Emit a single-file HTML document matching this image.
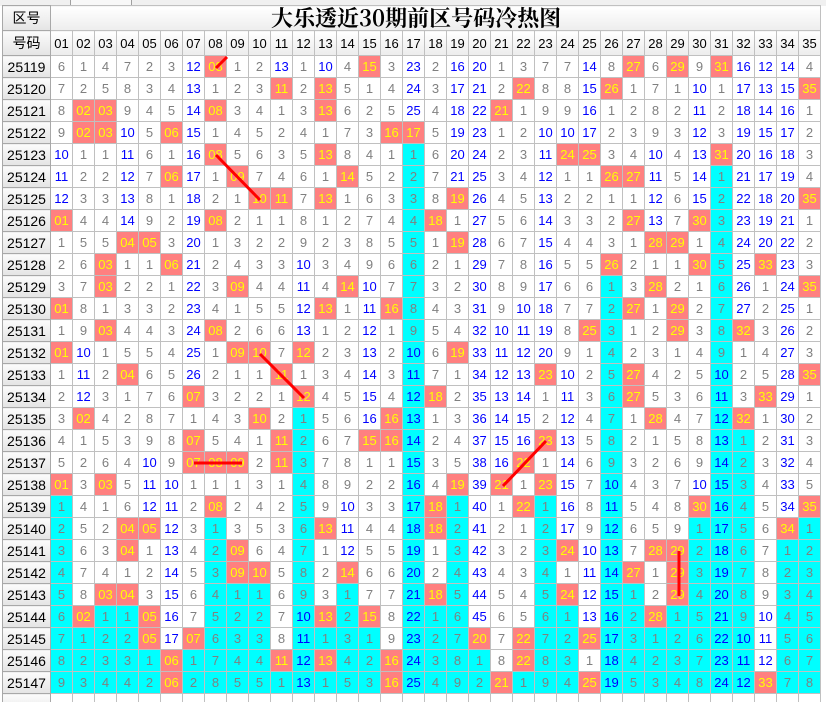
<!DOCTYPE html>
<html><head><meta charset="utf-8"><style>
html,body{margin:0;padding:0;background:#fff;width:826px;height:702px;overflow:hidden;position:relative}
.top{position:absolute;left:0;top:0;width:826px;height:6px;background:#f0f0f0}
.tab{position:absolute;left:70px;top:-2px;width:60px;height:6px;border:1px solid #a0a0a0;background:#f8f8f8}
table{position:absolute;left:2px;top:5px;border-collapse:collapse;table-layout:fixed;font-family:"Liberation Sans","Noto Sans CJK SC",sans-serif}
td,th{border:1px solid #c0c0c0;padding:0;text-align:center;font-weight:normal;overflow:hidden;white-space:nowrap}
td{width:21px;height:21px;font-size:13px;color:#808080;line-height:21px}
th{width:47px;font-size:14px;color:#000;background:linear-gradient(#fbfbfb,#e4e4e4);border-color:#a8a8a8}
tr.hd td{color:#000;font-size:13px;background:linear-gradient(#fff,#ececec);height:24px;border-color:#c0c0c0}
.t{font-family:"Noto Serif CJK SC",serif;font-weight:bold;font-size:22px;color:#000;text-align:left;padding-left:220px;background:linear-gradient(#fff,#ededed);height:24px;line-height:24px}
.b{color:#00f}.h{background:#ff8080;color:#ff0}.c{background:#0ff}.d{background:#0ff;color:#00f}
svg{position:absolute;left:0;top:0}
</style></head><body>
<div class="top"></div><div class="tab"></div>
<table>
<tr><th style="height:24px">区号</th><td colspan="35" class="t">大乐透近30期前区号码冷热图</td></tr>
<tr class="hd"><th style="height:24px">号码</th><td>01</td><td>02</td><td>03</td><td>04</td><td>05</td><td>06</td><td>07</td><td>08</td><td>09</td><td>10</td><td>11</td><td>12</td><td>13</td><td>14</td><td>15</td><td>16</td><td>17</td><td>18</td><td>19</td><td>20</td><td>21</td><td>22</td><td>23</td><td>24</td><td>25</td><td>26</td><td>27</td><td>28</td><td>29</td><td>30</td><td>31</td><td>32</td><td>33</td><td>34</td><td>35</td></tr>
<tr><th>25119</th><td>6</td><td>1</td><td>4</td><td>7</td><td>2</td><td>3</td><td class=b>12</td><td class=h>08</td><td>1</td><td>2</td><td class=b>13</td><td>1</td><td class=b>10</td><td>4</td><td class=h>15</td><td>3</td><td class=b>23</td><td>2</td><td class=b>16</td><td class=b>20</td><td>1</td><td>3</td><td>7</td><td>7</td><td class=b>14</td><td>8</td><td class=h>27</td><td>6</td><td class=h>29</td><td>9</td><td class=h>31</td><td class=b>16</td><td class=b>12</td><td class=b>14</td><td>4</td></tr>
<tr><th>25120</th><td>7</td><td>2</td><td>5</td><td>8</td><td>3</td><td>4</td><td class=b>13</td><td>1</td><td>2</td><td>3</td><td class=h>11</td><td>2</td><td class=h>13</td><td>5</td><td>1</td><td>4</td><td class=b>24</td><td>3</td><td class=b>17</td><td class=b>21</td><td>2</td><td class=h>22</td><td>8</td><td>8</td><td class=b>15</td><td class=h>26</td><td>1</td><td>7</td><td>1</td><td class=b>10</td><td>1</td><td class=b>17</td><td class=b>13</td><td class=b>15</td><td class=h>35</td></tr>
<tr><th>25121</th><td>8</td><td class=h>02</td><td class=h>03</td><td>9</td><td>4</td><td>5</td><td class=b>14</td><td class=h>08</td><td>3</td><td>4</td><td>1</td><td>3</td><td class=h>13</td><td>6</td><td>2</td><td>5</td><td class=b>25</td><td>4</td><td class=b>18</td><td class=b>22</td><td class=h>21</td><td>1</td><td>9</td><td>9</td><td class=b>16</td><td>1</td><td>2</td><td>8</td><td>2</td><td class=b>11</td><td>2</td><td class=b>18</td><td class=b>14</td><td class=b>16</td><td>1</td></tr>
<tr><th>25122</th><td>9</td><td class=h>02</td><td class=h>03</td><td class=b>10</td><td>5</td><td class=h>06</td><td class=b>15</td><td>1</td><td>4</td><td>5</td><td>2</td><td>4</td><td>1</td><td>7</td><td>3</td><td class=h>16</td><td class=h>17</td><td>5</td><td class=b>19</td><td class=b>23</td><td>1</td><td>2</td><td class=b>10</td><td class=b>10</td><td class=b>17</td><td>2</td><td>3</td><td>9</td><td>3</td><td class=b>12</td><td>3</td><td class=b>19</td><td class=b>15</td><td class=b>17</td><td>2</td></tr>
<tr><th>25123</th><td class=b>10</td><td>1</td><td>1</td><td class=b>11</td><td>6</td><td>1</td><td class=b>16</td><td class=h>08</td><td>5</td><td>6</td><td>3</td><td>5</td><td class=h>13</td><td>8</td><td>4</td><td>1</td><td class=c>1</td><td>6</td><td class=b>20</td><td class=b>24</td><td>2</td><td>3</td><td class=b>11</td><td class=h>24</td><td class=h>25</td><td>3</td><td>4</td><td class=b>10</td><td>4</td><td class=b>13</td><td class=h>31</td><td class=b>20</td><td class=b>16</td><td class=b>18</td><td>3</td></tr>
<tr><th>25124</th><td class=b>11</td><td>2</td><td>2</td><td class=b>12</td><td>7</td><td class=h>06</td><td class=b>17</td><td>1</td><td class=h>09</td><td>7</td><td>4</td><td>6</td><td>1</td><td class=h>14</td><td>5</td><td>2</td><td class=c>2</td><td>7</td><td class=b>21</td><td class=b>25</td><td>3</td><td>4</td><td class=b>12</td><td>1</td><td>1</td><td class=h>26</td><td class=h>27</td><td class=b>11</td><td>5</td><td class=b>14</td><td class=c>1</td><td class=b>21</td><td class=b>17</td><td class=b>19</td><td>4</td></tr>
<tr><th>25125</th><td class=b>12</td><td>3</td><td>3</td><td class=b>13</td><td>8</td><td>1</td><td class=b>18</td><td>2</td><td>1</td><td class=h>10</td><td class=h>11</td><td>7</td><td class=h>13</td><td>1</td><td>6</td><td>3</td><td class=c>3</td><td>8</td><td class=h>19</td><td class=b>26</td><td>4</td><td>5</td><td class=b>13</td><td>2</td><td>2</td><td>1</td><td>1</td><td class=b>12</td><td>6</td><td class=b>15</td><td class=c>2</td><td class=b>22</td><td class=b>18</td><td class=b>20</td><td class=h>35</td></tr>
<tr><th>25126</th><td class=h>01</td><td>4</td><td>4</td><td class=b>14</td><td>9</td><td>2</td><td class=b>19</td><td class=h>08</td><td>2</td><td>1</td><td>1</td><td>8</td><td>1</td><td>2</td><td>7</td><td>4</td><td class=c>4</td><td class=h>18</td><td>1</td><td class=b>27</td><td>5</td><td>6</td><td class=b>14</td><td>3</td><td>3</td><td>2</td><td class=h>27</td><td class=b>13</td><td>7</td><td class=h>30</td><td class=c>3</td><td class=b>23</td><td class=b>19</td><td class=b>21</td><td>1</td></tr>
<tr><th>25127</th><td>1</td><td>5</td><td>5</td><td class=h>04</td><td class=h>05</td><td>3</td><td class=b>20</td><td>1</td><td>3</td><td>2</td><td>2</td><td>9</td><td>2</td><td>3</td><td>8</td><td>5</td><td class=c>5</td><td>1</td><td class=h>19</td><td class=b>28</td><td>6</td><td>7</td><td class=b>15</td><td>4</td><td>4</td><td>3</td><td>1</td><td class=h>28</td><td class=h>29</td><td>1</td><td class=c>4</td><td class=b>24</td><td class=b>20</td><td class=b>22</td><td>2</td></tr>
<tr><th>25128</th><td>2</td><td>6</td><td class=h>03</td><td>1</td><td>1</td><td class=h>06</td><td class=b>21</td><td>2</td><td>4</td><td>3</td><td>3</td><td class=b>10</td><td>3</td><td>4</td><td>9</td><td>6</td><td class=c>6</td><td>2</td><td>1</td><td class=b>29</td><td>7</td><td>8</td><td class=b>16</td><td>5</td><td>5</td><td class=h>26</td><td>2</td><td>1</td><td>1</td><td class=h>30</td><td class=c>5</td><td class=b>25</td><td class=h>33</td><td class=b>23</td><td>3</td></tr>
<tr><th>25129</th><td>3</td><td>7</td><td class=h>03</td><td>2</td><td>2</td><td>1</td><td class=b>22</td><td>3</td><td class=h>09</td><td>4</td><td>4</td><td class=b>11</td><td>4</td><td class=h>14</td><td class=b>10</td><td>7</td><td class=c>7</td><td>3</td><td>2</td><td class=b>30</td><td>8</td><td>9</td><td class=b>17</td><td>6</td><td>6</td><td class=c>1</td><td>3</td><td class=h>28</td><td>2</td><td>1</td><td class=c>6</td><td class=b>26</td><td>1</td><td class=b>24</td><td class=h>35</td></tr>
<tr><th>25130</th><td class=h>01</td><td>8</td><td>1</td><td>3</td><td>3</td><td>2</td><td class=b>23</td><td>4</td><td>1</td><td>5</td><td>5</td><td class=b>12</td><td class=h>13</td><td>1</td><td class=b>11</td><td class=h>16</td><td class=c>8</td><td>4</td><td>3</td><td class=b>31</td><td>9</td><td class=b>10</td><td class=b>18</td><td>7</td><td>7</td><td class=c>2</td><td class=h>27</td><td>1</td><td class=h>29</td><td>2</td><td class=c>7</td><td class=b>27</td><td>2</td><td class=b>25</td><td>1</td></tr>
<tr><th>25131</th><td>1</td><td>9</td><td class=h>03</td><td>4</td><td>4</td><td>3</td><td class=b>24</td><td class=h>08</td><td>2</td><td>6</td><td>6</td><td class=b>13</td><td>1</td><td>2</td><td class=b>12</td><td>1</td><td class=c>9</td><td>5</td><td>4</td><td class=b>32</td><td class=b>10</td><td class=b>11</td><td class=b>19</td><td>8</td><td class=h>25</td><td class=c>3</td><td>1</td><td>2</td><td class=h>29</td><td>3</td><td class=c>8</td><td class=h>32</td><td>3</td><td class=b>26</td><td>2</td></tr>
<tr><th>25132</th><td class=h>01</td><td class=b>10</td><td>1</td><td>5</td><td>5</td><td>4</td><td class=b>25</td><td>1</td><td class=h>09</td><td class=h>10</td><td>7</td><td class=h>12</td><td>2</td><td>3</td><td class=b>13</td><td>2</td><td class=d>10</td><td>6</td><td class=h>19</td><td class=b>33</td><td class=b>11</td><td class=b>12</td><td class=b>20</td><td>9</td><td>1</td><td class=c>4</td><td>2</td><td>3</td><td>1</td><td>4</td><td class=c>9</td><td>1</td><td>4</td><td class=b>27</td><td>3</td></tr>
<tr><th>25133</th><td>1</td><td class=b>11</td><td>2</td><td class=h>04</td><td>6</td><td>5</td><td class=b>26</td><td>2</td><td>1</td><td>1</td><td class=h>11</td><td>1</td><td>3</td><td>4</td><td class=b>14</td><td>3</td><td class=d>11</td><td>7</td><td>1</td><td class=b>34</td><td class=b>12</td><td class=b>13</td><td class=h>23</td><td class=b>10</td><td>2</td><td class=c>5</td><td class=h>27</td><td>4</td><td>2</td><td>5</td><td class=d>10</td><td>2</td><td>5</td><td class=b>28</td><td class=h>35</td></tr>
<tr><th>25134</th><td>2</td><td class=b>12</td><td>3</td><td>1</td><td>7</td><td>6</td><td class=h>07</td><td>3</td><td>2</td><td>2</td><td>1</td><td class=h>12</td><td>4</td><td>5</td><td class=b>15</td><td>4</td><td class=d>12</td><td class=h>18</td><td>2</td><td class=b>35</td><td class=b>13</td><td class=b>14</td><td>1</td><td class=b>11</td><td>3</td><td class=c>6</td><td class=h>27</td><td>5</td><td>3</td><td>6</td><td class=d>11</td><td>3</td><td class=h>33</td><td class=b>29</td><td>1</td></tr>
<tr><th>25135</th><td>3</td><td class=h>02</td><td>4</td><td>2</td><td>8</td><td>7</td><td>1</td><td>4</td><td>3</td><td class=h>10</td><td>2</td><td class=c>1</td><td>5</td><td>6</td><td class=b>16</td><td class=h>16</td><td class=d>13</td><td>1</td><td>3</td><td class=b>36</td><td class=b>14</td><td class=b>15</td><td>2</td><td class=b>12</td><td>4</td><td class=c>7</td><td>1</td><td class=h>28</td><td>4</td><td>7</td><td class=d>12</td><td class=h>32</td><td>1</td><td class=b>30</td><td>2</td></tr>
<tr><th>25136</th><td>4</td><td>1</td><td>5</td><td>3</td><td>9</td><td>8</td><td class=h>07</td><td>5</td><td>4</td><td>1</td><td class=h>11</td><td class=c>2</td><td>6</td><td>7</td><td class=h>15</td><td class=h>16</td><td class=d>14</td><td>2</td><td>4</td><td class=b>37</td><td class=b>15</td><td class=b>16</td><td class=h>23</td><td class=b>13</td><td>5</td><td class=c>8</td><td>2</td><td>1</td><td>5</td><td>8</td><td class=d>13</td><td class=c>1</td><td>2</td><td class=b>31</td><td>3</td></tr>
<tr><th>25137</th><td>5</td><td>2</td><td>6</td><td>4</td><td class=b>10</td><td>9</td><td class=h>07</td><td class=h>08</td><td class=h>09</td><td>2</td><td class=h>11</td><td class=c>3</td><td>7</td><td>8</td><td>1</td><td>1</td><td class=d>15</td><td>3</td><td>5</td><td class=b>38</td><td class=b>16</td><td class=h>22</td><td>1</td><td class=b>14</td><td>6</td><td class=c>9</td><td>3</td><td>2</td><td>6</td><td>9</td><td class=d>14</td><td class=c>2</td><td>3</td><td class=b>32</td><td>4</td></tr>
<tr><th>25138</th><td class=h>01</td><td>3</td><td class=h>03</td><td>5</td><td class=b>11</td><td class=b>10</td><td>1</td><td>1</td><td>1</td><td>3</td><td>1</td><td class=c>4</td><td>8</td><td>9</td><td>2</td><td>2</td><td class=d>16</td><td>4</td><td class=h>19</td><td class=b>39</td><td class=h>21</td><td>1</td><td class=h>23</td><td class=b>15</td><td>7</td><td class=d>10</td><td>4</td><td>3</td><td>7</td><td class=b>10</td><td class=d>15</td><td class=c>3</td><td>4</td><td class=b>33</td><td>5</td></tr>
<tr><th>25139</th><td class=c>1</td><td>4</td><td>1</td><td>6</td><td class=b>12</td><td class=b>11</td><td>2</td><td class=h>08</td><td>2</td><td>4</td><td>2</td><td class=c>5</td><td>9</td><td class=b>10</td><td>3</td><td>3</td><td class=d>17</td><td class=h>18</td><td class=c>1</td><td class=b>40</td><td>1</td><td class=h>22</td><td class=c>1</td><td class=b>16</td><td>8</td><td class=d>11</td><td>5</td><td>4</td><td>8</td><td class=h>30</td><td class=d>16</td><td class=c>4</td><td>5</td><td class=b>34</td><td class=h>35</td></tr>
<tr><th>25140</th><td class=c>2</td><td>5</td><td>2</td><td class=h>04</td><td class=h>05</td><td class=b>12</td><td>3</td><td class=c>1</td><td>3</td><td>5</td><td>3</td><td class=c>6</td><td class=h>13</td><td class=b>11</td><td>4</td><td>4</td><td class=d>18</td><td class=h>18</td><td class=c>2</td><td class=b>41</td><td>2</td><td>1</td><td class=c>2</td><td class=b>17</td><td>9</td><td class=d>12</td><td>6</td><td>5</td><td>9</td><td class=c>1</td><td class=d>17</td><td class=c>5</td><td>6</td><td class=h>34</td><td class=c>1</td></tr>
<tr><th>25141</th><td class=c>3</td><td>6</td><td>3</td><td class=h>04</td><td>1</td><td class=b>13</td><td>4</td><td class=c>2</td><td class=h>09</td><td>6</td><td>4</td><td class=c>7</td><td>1</td><td class=b>12</td><td>5</td><td>5</td><td class=d>19</td><td>1</td><td class=c>3</td><td class=b>42</td><td>3</td><td>2</td><td class=c>3</td><td class=h>24</td><td class=b>10</td><td class=d>13</td><td>7</td><td class=h>28</td><td class=h>29</td><td class=c>2</td><td class=d>18</td><td class=c>6</td><td>7</td><td class=c>1</td><td class=c>2</td></tr>
<tr><th>25142</th><td class=c>4</td><td>7</td><td>4</td><td>1</td><td>2</td><td class=b>14</td><td>5</td><td class=c>3</td><td class=h>09</td><td class=h>10</td><td>5</td><td class=c>8</td><td>2</td><td class=h>14</td><td>6</td><td>6</td><td class=d>20</td><td>2</td><td class=c>4</td><td class=b>43</td><td>4</td><td>3</td><td class=c>4</td><td>1</td><td class=b>11</td><td class=d>14</td><td class=h>27</td><td>1</td><td class=h>29</td><td class=c>3</td><td class=d>19</td><td class=c>7</td><td>8</td><td class=c>2</td><td class=c>3</td></tr>
<tr><th>25143</th><td class=c>5</td><td>8</td><td class=h>03</td><td class=h>04</td><td>3</td><td class=b>15</td><td>6</td><td class=c>4</td><td class=c>1</td><td class=c>1</td><td>6</td><td class=c>9</td><td>3</td><td class=c>1</td><td>7</td><td>7</td><td class=d>21</td><td class=h>18</td><td class=c>5</td><td class=b>44</td><td>5</td><td>4</td><td class=c>5</td><td class=h>24</td><td class=b>12</td><td class=d>15</td><td class=c>1</td><td>2</td><td class=h>29</td><td class=c>4</td><td class=d>20</td><td class=c>8</td><td>9</td><td class=c>3</td><td class=c>4</td></tr>
<tr><th>25144</th><td class=c>6</td><td class=h>02</td><td class=c>1</td><td class=c>1</td><td class=h>05</td><td class=b>16</td><td>7</td><td class=c>5</td><td class=c>2</td><td class=c>2</td><td>7</td><td class=d>10</td><td class=h>13</td><td class=c>2</td><td class=h>15</td><td>8</td><td class=d>22</td><td class=c>1</td><td class=c>6</td><td class=b>45</td><td>6</td><td>5</td><td class=c>6</td><td class=c>1</td><td class=b>13</td><td class=d>16</td><td class=c>2</td><td class=h>28</td><td class=c>1</td><td class=c>5</td><td class=d>21</td><td class=c>9</td><td class=b>10</td><td class=c>4</td><td class=c>5</td></tr>
<tr><th>25145</th><td class=c>7</td><td class=c>1</td><td class=c>2</td><td class=c>2</td><td class=h>05</td><td class=b>17</td><td class=h>07</td><td class=c>6</td><td class=c>3</td><td class=c>3</td><td>8</td><td class=d>11</td><td class=c>1</td><td class=c>3</td><td class=c>1</td><td>9</td><td class=d>23</td><td class=c>2</td><td class=c>7</td><td class=h>20</td><td>7</td><td class=h>22</td><td class=c>7</td><td class=c>2</td><td class=h>25</td><td class=d>17</td><td class=c>3</td><td class=c>1</td><td class=c>2</td><td class=c>6</td><td class=d>22</td><td class=d>10</td><td class=b>11</td><td class=c>5</td><td class=c>6</td></tr>
<tr><th>25146</th><td class=c>8</td><td class=c>2</td><td class=c>3</td><td class=c>3</td><td class=c>1</td><td class=h>06</td><td class=c>1</td><td class=c>7</td><td class=c>4</td><td class=c>4</td><td class=h>11</td><td class=d>12</td><td class=h>13</td><td class=c>4</td><td class=c>2</td><td class=h>16</td><td class=d>24</td><td class=c>3</td><td class=c>8</td><td class=c>1</td><td>8</td><td class=h>22</td><td class=c>8</td><td class=c>3</td><td>1</td><td class=d>18</td><td class=c>4</td><td class=c>2</td><td class=c>3</td><td class=c>7</td><td class=d>23</td><td class=d>11</td><td class=b>12</td><td class=c>6</td><td class=c>7</td></tr>
<tr><th>25147</th><td class=c>9</td><td class=c>3</td><td class=c>4</td><td class=c>4</td><td class=c>2</td><td class=h>06</td><td class=c>2</td><td class=c>8</td><td class=c>5</td><td class=c>5</td><td class=c>1</td><td class=d>13</td><td class=c>1</td><td class=c>5</td><td class=c>3</td><td class=h>16</td><td class=d>25</td><td class=c>4</td><td class=c>9</td><td class=c>2</td><td class=h>21</td><td class=c>1</td><td class=c>9</td><td class=c>4</td><td class=h>25</td><td class=d>19</td><td class=c>5</td><td class=c>3</td><td class=c>4</td><td class=c>8</td><td class=d>24</td><td class=d>12</td><td class=h>33</td><td class=c>7</td><td class=c>8</td></tr>
<tr><th></th><td></td><td></td><td></td><td></td><td></td><td></td><td></td><td></td><td></td><td></td><td></td><td></td><td></td><td></td><td></td><td></td><td></td><td></td><td></td><td></td><td></td><td></td><td></td><td></td><td></td><td></td><td></td><td></td><td></td><td></td><td></td><td></td><td></td><td></td><td></td></tr>
</table>
<svg width="826" height="702" viewBox="0 0 826 702">
<g stroke="#ff0000" stroke-width="3" stroke-linecap="butt">
<line x1="216" y1="68" x2="227" y2="57"/>
<line x1="216" y1="155" x2="260" y2="200"/>
<line x1="260" y1="354" x2="304" y2="398"/>
<line x1="194" y1="463" x2="242" y2="463"/>
<line x1="546" y1="441" x2="503" y2="486"/>
<line x1="679" y1="551" x2="679" y2="596"/>
</g>
</svg>
</body></html>
